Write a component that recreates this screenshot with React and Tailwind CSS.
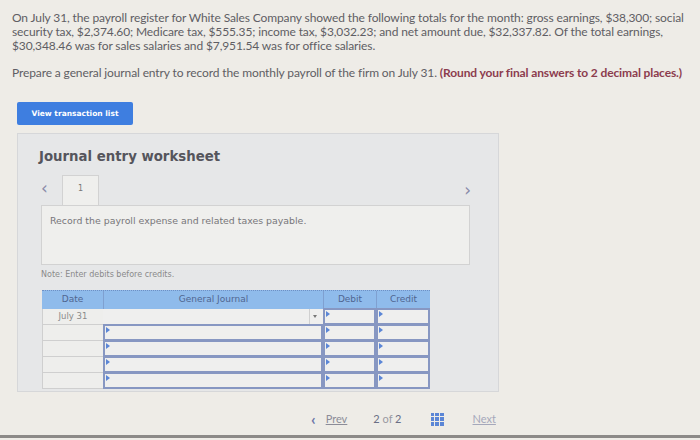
import React from "react";

function Caret() {
  return <span className="absolute left-[1px] top-[1px] w-0 h-0 border-t-[3px] border-b-[3px] border-l-[4px] border-t-transparent border-b-transparent border-l-[#5b86d6]" />;
}

function Row({ date, first }) {
  return (
    <div className="flex h-[16px]">
      <div className="w-[61px] border-l border-b border-[#cfcfcf] bg-[#eeeeec] text-[8.5px] text-[#8a8a8a] flex items-center justify-center">
        {date}
      </div>
      {first ? (
        <div className="relative w-[220px] border-b border-dotted border-[#b8b8b8] bg-[#efefee]">
          <div className="absolute right-[4px] top-0 h-full w-[10px] border-l border-[#d0d0d0] flex items-center justify-center">
            <span className="w-0 h-0 border-l-[2px] border-r-[2px] border-t-[3px] border-l-transparent border-r-transparent border-t-[#777]" />
          </div>
        </div>
      ) : (
        <div className="relative w-[220px] border-2 border-[#8797c2] -mt-[1px] bg-[#efefee]">
          <Caret />
        </div>
      )}
      <div className="relative w-[53px] border-2 border-[#8797c2] -mt-[1px] bg-[#efefee]">
        <Caret />
      </div>
      <div className="relative w-[54px] border-2 border-[#8797c2] -mt-[1px] bg-[#efefee]">
        <Caret />
      </div>
    </div>
  );
}

export default function App() {
  return (
    <div className="w-[700px] h-[440px] overflow-hidden bg-[#eeece7] text-[#5f5e64]" style={{ fontFamily: "Lato, 'Open Sans', sans-serif" }}>
      <div className="pl-[12px] pt-[11px] text-[12px] leading-[14px] tracking-[-0.12px] whitespace-nowrap">
        <p>
          On July 31, the payroll register for White Sales Company showed the following totals for the month: gross earnings, $38,300; social<br />
          security tax, $2,374.60; Medicare tax, $555.35; income tax, $3,032.23; and net amount due, $32,337.82. Of the total earnings,<br />
          $30,348.46 was for sales salaries and $7,951.54 was for office salaries.
        </p>
        <p className="mt-[13px]">
          Prepare a general journal entry to record the monthly payroll of the firm on July 31.{" "}
          <span className="font-bold text-[#8c3c4e]">(Round your final answers to 2 decimal places.)</span>
        </p>
      </div>

      <div className="ml-[17px] mt-[22px] w-[116px] h-[23px] rounded-[2px] bg-[#3e7ee0] text-white text-[7.5px] font-bold flex items-center justify-center" style={{ fontFamily: "'DejaVu Sans', sans-serif" }}>
        View transaction list
      </div>

      <div className="ml-[17px] mt-[8px] w-[482px] h-[259px] border border-[#d6d7d9] bg-[#e6e7e8] pt-[14px]" style={{ fontFamily: "'DejaVu Sans', Verdana, sans-serif" }}>
        <div className="ml-[21px] text-[13.3px] font-bold text-[#55555c] leading-[18px]">Journal entry worksheet</div>

        <div className="flex items-end ml-[23px] mt-[9px] w-[430px] h-[30px]">
          <span className="text-[17px] text-[#8a8ba8] mb-[8px] w-[21px] leading-none">&lsaquo;</span>
          <div className="w-[37px] h-[30px] border border-b-0 border-[#d2d2d2] bg-[#efefed] text-[8px] text-[#777] flex justify-center pt-[7px]">1</div>
          <div className="flex-1" />
          <span className="text-[17px] text-[#8a8ba8] mb-[6px] leading-none">&rsaquo;</span>
        </div>

        <div className="ml-[23px] w-[429px] h-[60px] border border-[#d2d2d2] bg-[#efefed] pl-[8px] pt-[8px] text-[9.4px] text-[#77767a]">
          Record the payroll expense and related taxes payable.
        </div>

        <div className="ml-[23px] mt-[4px] text-[8px] text-[#8a8a8a]">Note: Enter debits before credits.</div>

        <div className="ml-[24px] mt-[9px] w-[388px]">
          <div className="flex h-[19px] bg-[#8fbbeb] text-[9px] text-[#4f6690] border-t border-dotted border-[#6e8fc4]">
            <div className="w-[61px] flex items-center justify-center">Date</div>
            <div className="w-[220px] border-l border-[#7fa0d0] flex items-center justify-center">General Journal</div>
            <div className="w-[53px] border-l border-[#7fa0d0] flex items-center justify-center">Debit</div>
            <div className="w-[54px] border-l border-[#7fa0d0] flex items-center justify-center">Credit</div>
          </div>
          <Row date="July 31" first />
          <Row />
          <Row />
          <Row />
          <Row />
        </div>
      </div>

      <div className="flex items-center mt-[19px] ml-[311px] text-[11px] text-[#8c8c98]" style={{ fontFamily: "Lato, sans-serif" }}>
        <span className="text-[#6c76a8] text-[16px] font-bold leading-none mr-[10px]">&lsaquo;</span>
        <span className="underline">Prev</span>
        <span className="ml-[26px] text-[#6a6f85]">2 <span className="text-[#9a9aa2]">of</span> 2</span>
        <div className="ml-[29px] grid grid-cols-3 gap-[1px] w-[13px] h-[13px]">
          {Array.from({ length: 9 }).map((_, i) => (
            <span key={i} className="bg-[#5b86d6]" />
          ))}
        </div>
        <span className="ml-[29px] underline text-[#a5a8bb]">Next</span>
      </div>
      <div className="mt-[7px] h-[3px] bg-[#8c8a88]" />
    </div>
  );
}
